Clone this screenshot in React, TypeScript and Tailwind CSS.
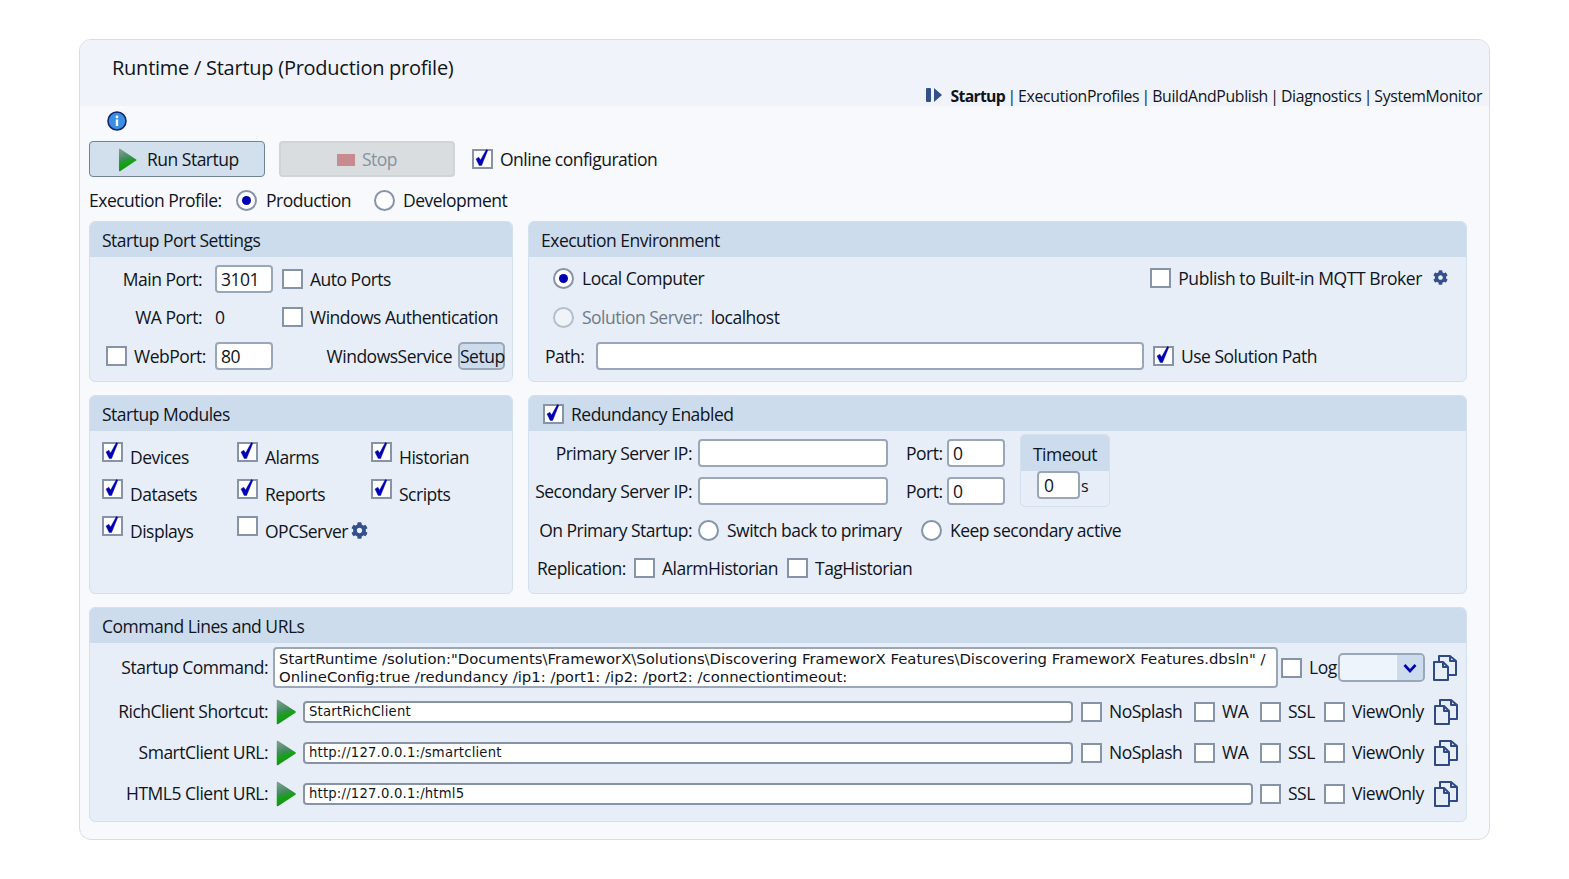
import { useId } from 'react';
import { FaCog } from 'react-icons/fa';

function Check({ checked = false, className = '' }: { checked?: boolean; className?: string }) {
  return (
    <span className={`relative block w-[21px] h-[20px] shrink-0 bg-white border-2 border-[#8794a8] ${className}`}>
      {checked && (
        <svg viewBox="0 0 20 20" className="absolute left-[-2px] top-[-3px] w-[20px] h-[20px]">
          <path d="M4 11 L6.8 9.2 L8.6 12 L14.4 1.5 L15.8 2.2 L9.6 17.5 L7.2 17.5 Z" fill="#0000b4" stroke="#0000b4" strokeWidth="0.4" strokeLinejoin="round" />
        </svg>
      )}
    </span>
  );
}

function Radio({ checked = false, muted = false, className = '' }: { checked?: boolean; muted?: boolean; className?: string }) {
  return (
    <span className={`flex items-center justify-center w-[21px] h-[21px] shrink-0 rounded-full border-2 ${muted ? 'border-[#b4bfcc] bg-[#f0f4f9]' : 'border-[#8794a8] bg-white'} ${className}`}>
      {checked && <span className="block w-[9px] h-[9px] rounded-full bg-[#0000b4]" />}
    </span>
  );
}

function Field({ value = '', className = '' }: { value?: string; className?: string }) {
  return (
    <span className={`block h-[28px] shrink-0 bg-white border-2 border-[#9aa7b8] rounded-[4px] pl-[4px] leading-[25px] ${className}`}>{value}</span>
  );
}

function UrlField({ value, className = '' }: { value: string; className?: string }) {
  return (
    <span className={`block h-[22px] shrink-0 bg-white border-2 border-[#8794a8] rounded-[4px] pl-[4px] font-['DejaVu_Sans',sans-serif] text-[13.2px] tracking-[0.2px] leading-[18px] ${className}`}>{value}</span>
  );
}

function Play({ className = '' }: { className?: string }) {
  const id = useId();
  return (
    <svg viewBox="0 0 20 26" className={`shrink-0 ${className}`}>
      <defs>
        <linearGradient id={id} x1="0.1" y1="0" x2="0.35" y2="1">
          <stop offset="0" stopColor="#7d9f90" />
          <stop offset="0.5" stopColor="#3c8a58" />
          <stop offset="0.64" stopColor="#12a512" />
          <stop offset="1" stopColor="#1f8a1f" />
        </linearGradient>
      </defs>
      <path d="M1.5 1.5 L19 13 L1.5 24.5 Z" fill={`url(#${id})`} stroke={`url(#${id})`} strokeWidth="1.5" strokeLinejoin="round" />
    </svg>
  );
}

function Gear({ className = '' }: { className?: string }) {
  return <FaCog className={`shrink-0 text-[#34508c] ${className}`} />;
}

function CopyIcon() {
  return (
    <svg viewBox="0 0 24 26" className="w-[24px] h-[26px] shrink-0" fill="none" stroke="#2f4a85" strokeWidth="2" strokeLinejoin="round">
      <path d="M1 7 H10 L15 12 V25 H1 Z" />
      <path d="M10 7 V12 H15" />
      <path d="M6 7 V1 H17 L23 6 V20 H15" />
      <path d="M17 1 V6 H23" />
    </svg>
  );
}

function Panel({ title, children, className = '' }: { title: React.ReactNode; children: React.ReactNode; className?: string }) {
  return (
    <section className={`bg-[#e7eef7] border border-[#d3e0ed] rounded-[6px] overflow-hidden ${className}`}>
      <div className="h-[35px] bg-[#cddcec] flex items-center pl-[12px] pt-[1px]">{title}</div>
      {children}
    </section>
  );
}

function ModuleItem({ label, checked, gear }: { label: string; checked?: boolean; gear?: boolean }) {
  return (
    <div className="flex items-start">
      <Check checked={checked} />
      <span className="ml-[7px] mt-[2px]">{label}</span>
      {gear && <Gear className="ml-[3px] mt-[6px] w-[17px] h-[17px]" />}
    </div>
  );
}

function NavSep() {
  return <span className="w-[13px] text-center">|</span>;
}

const clientRows = [
  { label: 'RichClient Shortcut:', value: 'StartRichClient', full: true },
  { label: 'SmartClient URL:', value: 'http://127.0.0.1:/smartclient', full: true },
  { label: 'HTML5 Client URL:', value: 'http://127.0.0.1:/html5', full: false },
];

export default function App() {
  return (
    <div className="min-h-screen bg-white pt-[39px] pl-[79px] font-['Open_Sans',sans-serif] text-[17.5px] tracking-[-0.5px] text-[#10141c] whitespace-nowrap">
      <div className="w-[1411px] h-[801px] bg-[#f7f9fd] border border-[#d9dce0] rounded-[12px] overflow-hidden">
        {/* Header */}
        <header className="h-[66px] bg-[#f0f3f9] relative">
          <h1 className="pl-[32px] pt-[14px] text-[20px] leading-[28px] tracking-[-0.25px]">Runtime / Startup (Production profile)</h1>
          <nav className="absolute right-[7px] bottom-[-1px] flex items-center h-[22px] pt-[2px] text-[15.8px] tracking-[-0.35px]">
            <svg viewBox="0 0 16 14" className="w-[16px] h-[14px] mr-[8px] mb-[5px]">
              <rect x="0" y="0" width="5" height="14" rx="1" fill="#34508c" />
              <path d="M8 0 L16 7 L8 14 Z" fill="#34508c" />
            </svg>
            <b className="font-bold tracking-[-0.7px]">Startup</b>
            <NavSep />
            <span>ExecutionProfiles</span>
            <NavSep />
            <span>BuildAndPublish</span>
            <NavSep />
            <span>Diagnostics</span>
            <NavSep />
            <span>SystemMonitor</span>
          </nav>
        </header>

        <div className="pl-[9px]">
          {/* Info */}
          <div className="h-[35px] pl-[18px] pt-[5px]">
            <svg viewBox="0 0 20 20" className="w-[20px] h-[20px]">
              <circle cx="10" cy="10" r="9" fill="#3a8fe2" stroke="#14246e" strokeWidth="1.6" />
              <rect x="8.8" y="8.5" width="2.4" height="6.5" fill="#fff" />
              <circle cx="10" cy="6" r="1.4" fill="#fff" />
            </svg>
          </div>

          {/* Toolbar */}
          <div className="flex items-center h-[36px]">
            <button className="flex items-center w-[176px] h-[36px] bg-[#d2dfec] border border-[#71829c] rounded-[4px] pl-[28px] pt-[1px]">
              <Play className="w-[19px] h-[24px]" />
              <span className="ml-[10px]">Run Startup</span>
            </button>
            <button className="flex items-center w-[176px] h-[36px] ml-[14px] bg-[#d9dde0] border-2 border-[#cfd4d8] rounded-[4px] pl-[56px] pt-[1px] text-[#87939f]">
              <span className="block w-[18px] h-[12px] bg-[#c78a8e]" />
              <span className="ml-[7px]">Stop</span>
            </button>
            <Check checked className="ml-[17px]" />
            <span className="ml-[7px] pt-[1px]">Online configuration</span>
          </div>

          {/* Execution profile */}
          <div className="flex items-center h-[44px] pt-[2px]">
            <span className="w-[147px]">Execution Profile:</span>
            <Radio checked />
            <span className="ml-[9px] w-[108px]">Production</span>
            <Radio />
            <span className="ml-[8px]">Development</span>
          </div>

          <div className="grid grid-cols-[424px_939px] grid-rows-[161px_199px_215px] gap-x-[15px] gap-y-[13px]">
            {/* Startup Port Settings */}
            <Panel title="Startup Port Settings">
              <div className="pt-[3px]">
                <div className="flex items-center h-[38px]">
                  <span className="w-[112px] text-right">Main Port:</span>
                  <Field value="3101" className="ml-[13px] w-[58px]" />
                  <Check className="ml-[9px]" />
                  <span className="ml-[7px]">Auto Ports</span>
                </div>
                <div className="flex items-center h-[38px]">
                  <span className="w-[112px] text-right">WA Port:</span>
                  <span className="ml-[13px] w-[58px]">0</span>
                  <Check className="ml-[9px]" />
                  <span className="ml-[7px]">Windows Authentication</span>
                </div>
                <div className="flex items-center h-[38px] pl-[16px] mt-[1px]">
                  <Check />
                  <span className="ml-[7px] w-[71px]">WebPort:</span>
                  <Field value="80" className="ml-[10px] w-[58px]" />
                  <span className="ml-auto">WindowsService</span>
                  <button className="ml-[6px] mr-[7px] w-[47px] h-[28px] bg-[#cddcec] border-2 border-[#9aa7b8] rounded-[5px] leading-[22px] text-center">Setup</button>
                </div>
              </div>
            </Panel>

            {/* Execution Environment */}
            <Panel title="Execution Environment">
              <div className="pt-[2px]">
                <div className="flex items-center h-[38px] pl-[24px] pr-[18px]">
                  <Radio checked />
                  <span className="ml-[8px]">Local Computer</span>
                  <Check className="ml-auto" />
                  <span className="ml-[7px] tracking-[-0.41px]">Publish to Built-in MQTT Broker</span>
                  <Gear className="ml-[11px] w-[15px] h-[15px] -mt-[2px]" />
                </div>
                <div className="flex items-center h-[39px] pl-[24px] mt-[1px]">
                  <Radio muted />
                  <span className="ml-[8px] text-[#6f7b88]">Solution Server:</span>
                  <span className="ml-[8px]">localhost</span>
                </div>
                <div className="flex items-center h-[38px] pl-[16px]">
                  <span className="w-[51px]">Path:</span>
                  <Field className="w-[548px]" />
                  <Check checked className="ml-[9px]" />
                  <span className="ml-[7px]">Use Solution Path</span>
                </div>
              </div>
            </Panel>

            {/* Startup Modules */}
            <Panel title="Startup Modules">
              <div className="grid grid-cols-[135px_134px_1fr] auto-rows-[37px] pl-[12px] pt-[11px]">
                <ModuleItem label="Devices" checked />
                <ModuleItem label="Alarms" checked />
                <ModuleItem label="Historian" checked />
                <ModuleItem label="Datasets" checked />
                <ModuleItem label="Reports" checked />
                <ModuleItem label="Scripts" checked />
                <ModuleItem label="Displays" checked />
                <ModuleItem label="OPCServer" gear />
              </div>
            </Panel>

            {/* Redundancy */}
            <Panel
              title={
                <>
                  <Check checked className="ml-[2px]" />
                  <span className="ml-[7px]">Redundancy Enabled</span>
                </>
              }
            >
              <div className="pt-[3px]">
                <div className="flex h-[73px]">
                  <div className="w-[491px] pt-[5px] flex flex-col gap-[10px]">
                    <div className="flex items-center">
                      <span className="w-[163px] text-right">Primary Server IP:</span>
                      <Field className="ml-[6px] w-[190px]" />
                      <span className="ml-[18px] w-[35px]">Port:</span>
                      <Field value="0" className="ml-[6px] w-[58px]" />
                    </div>
                    <div className="flex items-center">
                      <span className="w-[163px] text-right">Secondary Server IP:</span>
                      <Field className="ml-[6px] w-[190px]" />
                      <span className="ml-[18px] w-[35px]">Port:</span>
                      <Field value="0" className="ml-[6px] w-[58px]" />
                    </div>
                  </div>
                  <div className="w-[90px] rounded-[5px] border border-[#d3e0ed] overflow-hidden">
                    <div className="h-[36px] bg-[#cddcec] flex items-center justify-center pt-[3px]">Timeout</div>
                    <div className="flex pl-[16px]">
                      <Field value="0" className="w-[43px] pl-[5px]" />
                      <span className="ml-[1px] text-[16px] leading-[30px]">s</span>
                    </div>
                  </div>
                </div>
                <div className="flex items-center h-[38px] mt-[4px]">
                  <span className="w-[163px] text-right">On Primary Startup:</span>
                  <Radio className="ml-[6px]" />
                  <span className="ml-[8px] w-[194px]">Switch back to primary</span>
                  <Radio />
                  <span className="ml-[8px]">Keep secondary active</span>
                </div>
                <div className="flex items-center h-[38px] pl-[8px]">
                  <span className="w-[97px]">Replication:</span>
                  <Check />
                  <span className="ml-[7px] w-[125px]">AlarmHistorian</span>
                  <Check />
                  <span className="ml-[7px]">TagHistorian</span>
                </div>
              </div>
            </Panel>

            {/* Command Lines and URLs */}
            <Panel title="Command Lines and URLs" className="col-span-2">
              <div className="pt-[4px]">
                <div className="flex items-center h-[41px]">
                  <span className="w-[178px] text-right">Startup Command:</span>
                  <div className="ml-[5px] w-[1005px] h-[41px] shrink-0 bg-white border-2 border-[#9aa7b8] rounded-[4px] pl-[4px] pt-[1px] font-['DejaVu_Sans',sans-serif] text-[14.87px] tracking-normal leading-[18px]">
                    <div>StartRuntime /solution:"Documents\FrameworX\Solutions\Discovering FrameworX Features\Discovering FrameworX Features.dbsln" /</div>
                    <div>OnlineConfig:true /redundancy /ip1: /port1: /ip2: /port2: /connectiontimeout:</div>
                  </div>
                  <Check className="ml-[3px]" />
                  <span className="ml-[7px] w-[29px]">Log</span>
                  <div className="flex w-[87px] h-[29px] bg-[#eef4fc] border-2 border-[#9aa7b8] rounded-[5px] overflow-hidden">
                    <span className="flex-1" />
                    <span className="w-[26px] bg-[#cddcec] flex items-center justify-center">
                      <svg viewBox="0 0 14 10" className="w-[14px] h-[10px]" fill="none" stroke="#0000b4" strokeWidth="2.6">
                        <path d="M1.5 2 L7 8 L12.5 2" />
                      </svg>
                    </span>
                  </div>
                  <span className="ml-[8px]"><CopyIcon /></span>
                </div>
                <div className="mt-[3px]">
                  {clientRows.map((row) => (
                    <div key={row.label} className="flex items-center h-[41px]">
                      <span className="w-[178px] text-right">{row.label}</span>
                      <Play className="ml-[8px] w-[20px] h-[26px]" />
                      <UrlField value={row.value} className={`ml-[7px] ${row.full ? 'w-[770px]' : 'w-[950px]'}`} />
                      {row.full && (
                        <>
                          <Check className="ml-[8px]" />
                          <span className="ml-[7px] w-[85px]">NoSplash</span>
                          <Check />
                          <span className="ml-[7px] w-[38px]">WA</span>
                        </>
                      )}
                      <Check className={row.full ? '' : 'ml-[7px]'} />
                      <span className="ml-[7px] w-[36px]">SSL</span>
                      <Check />
                      <span className="ml-[7px]">ViewOnly</span>
                      <span className="ml-auto mr-[8px]"><CopyIcon /></span>
                    </div>
                  ))}
                </div>
              </div>
            </Panel>
          </div>
        </div>
      </div>
    </div>
  );
}
